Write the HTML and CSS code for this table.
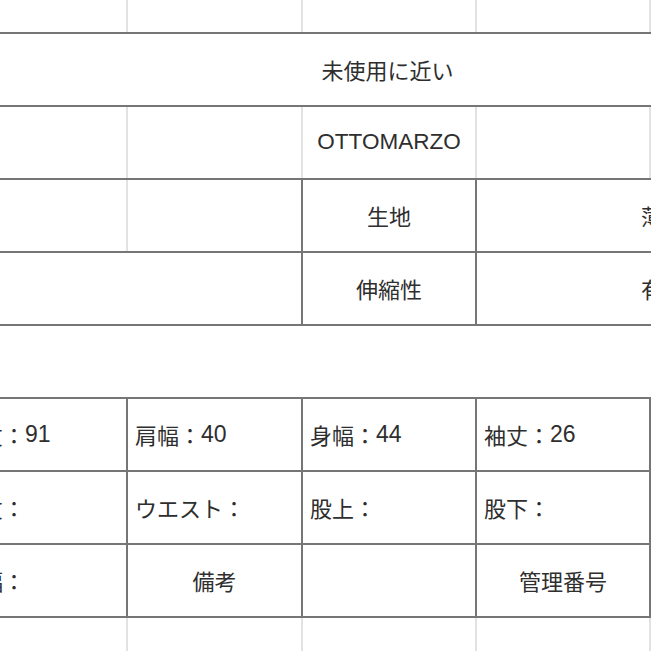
FILE: index.html
```html
<!DOCTYPE html>
<html lang="ja">
<head>
<meta charset="utf-8">
<link rel="stylesheet" href="styles.css">
</head>
<body>
<div class="sheet">
  <div class="row strip">
    <div class="cell"></div>
    <div class="cell ll"></div>
    <div class="cell ll"></div>
    <div class="cell ll"></div>
    <div class="cell ll"></div>
  </div>
  <div class="row bt">
    <div class="cell"></div>
    <div class="cell span3">未使用に近い</div>
    <div class="cell"></div>
  </div>
  <div class="row bt">
    <div class="cell"></div>
    <div class="cell ll"></div>
    <div class="cell ll latin">OTTOMARZO</div>
    <div class="cell ll"></div>
    <div class="cell ll"></div>
  </div>
  <div class="row bt">
    <div class="cell"></div>
    <div class="cell ll"></div>
    <div class="cell dl">生地</div>
    <div class="cell dl span2">薄手</div>
  </div>
  <div class="row bt bb">
    <div class="cell span2"></div>
    <div class="cell dl">伸縮性</div>
    <div class="cell dl span2">有り</div>
  </div>
  <div class="row gap"></div>
  <div class="row bt">
    <div class="cell left">着丈：<span class="num">91</span></div>
    <div class="cell dl left">肩幅：<span class="num">40</span></div>
    <div class="cell dl left">身幅：<span class="num">44</span></div>
    <div class="cell dl left">袖丈：<span class="num">26</span></div>
    <div class="cell dl"></div>
  </div>
  <div class="row bt">
    <div class="cell left">総丈：</div>
    <div class="cell dl left">ウエスト：</div>
    <div class="cell dl left">股上：</div>
    <div class="cell dl left">股下：</div>
    <div class="cell dl"></div>
  </div>
  <div class="row bt bb">
    <div class="cell left">裾幅：</div>
    <div class="cell dl">備考</div>
    <div class="cell dl"></div>
    <div class="cell dl">管理番号</div>
    <div class="cell dl"></div>
  </div>
  <div class="row strip-bottom">
    <div class="cell"></div>
    <div class="cell ll"></div>
    <div class="cell ll"></div>
    <div class="cell ll"></div>
    <div class="cell ll"></div>
  </div>
</div>
</body>
</html>
```
FILE: styles.css
```css
html, body {
  margin: 0;
  padding: 0;
  background: #ffffff;
  overflow: hidden;
}

body {
  width: 651px;
  height: 651px;
  font-family: "Liberation Sans", "Noto Sans CJK JP", sans-serif;
  font-size: 22px;
  color: #2e2e2e;
}

.sheet {
  width: 897px;
  margin-left: -48px;
}

.row {
  display: grid;
  grid-template-columns: 174px 175px 174px 174px 200px;
  height: 73px;
  box-sizing: border-box;
}

.row.strip {
  height: 32px;
}

.row.gap {
  height: 71px;
}

.row.strip-bottom {
  height: 40px;
}

.row.bb {
  height: 75px;
}

.bt {
  border-top: 2px solid #767676;
}

.bb {
  border-bottom: 2px solid #767676;
}

.cell {
  box-sizing: border-box;
  display: flex;
  align-items: center;
  justify-content: center;
  white-space: nowrap;
  overflow: hidden;
  padding-bottom: 1px;
}

.cell.latin {
  font-size: 22.5px;
}

.num {
  font-size: 23px;
}

.cell.left {
  justify-content: flex-start;
  padding-left: 7px;
}

.cell.span2 {
  grid-column: span 2;
}

.cell.span3 {
  grid-column: span 3;
}

.ll {
  border-left: 2px solid #e2e2e2;
}

.dl {
  border-left: 2px solid #767676;
}
```
